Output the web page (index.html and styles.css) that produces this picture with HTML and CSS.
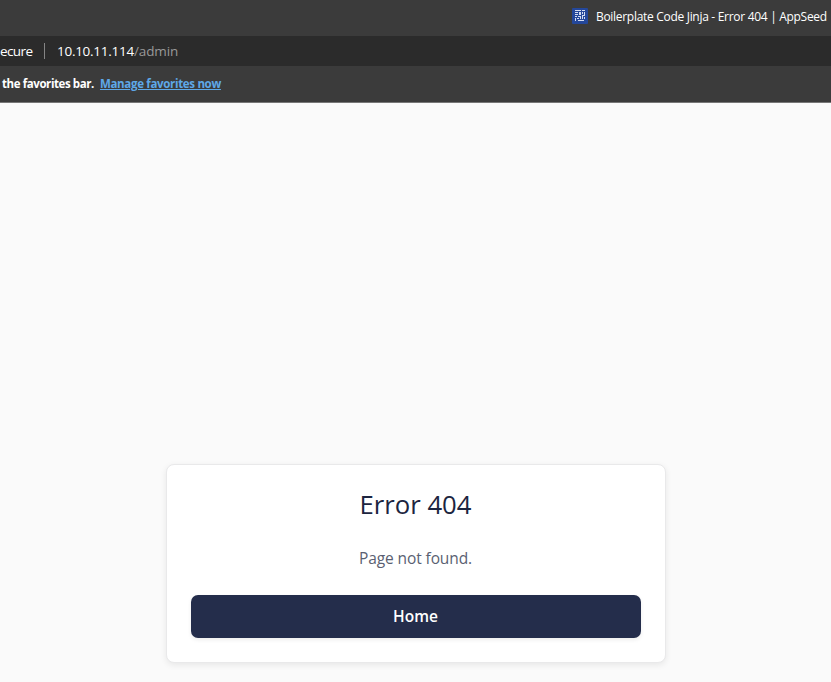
FILE: index.html
```
<!DOCTYPE html>
<html lang="en">
<head>
<meta charset="utf-8">
<title>Boilerplate Code Jinja - Error 404 | AppSeed</title>
<link rel="stylesheet" href="styles.css">
</head>
<body>
<header class="browser">
  <div class="tab-strip">
    <svg class="favicon" width="16" height="16" viewBox="0 0 16 16" aria-hidden="true">
      <rect width="16" height="16" rx="1" fill="#24479a"/>
      <path fill="#d3dcf2" d="M3 2h6v1H3zM10 2h3v1h-3zM3 4h3v1H3zM7 4h2v3H7zM10 4h1v2h-1zM12 4h1v4h-1zM3 6h3v1H3zM3 8h2v1H3zM6 8h3v1H6zM8 9h1v2H8zM10 7h2v1h-2zM10 8h1v3h-1zM12 9h1v2h-1zM3 10h1v3H3zM5 10h2v1H5zM6 12h6v1H6z"/>
    </svg>
    <span class="tab-title">Boilerplate Code Jinja - Error 404 | AppSeed</span>
  </div>
  <div class="address-bar">
    <span class="security">ecure</span>
    <span class="separator"></span>
    <span class="url"><span class="host">10.10.11.114</span><span class="path">/admin</span></span>
  </div>
  <div class="favorites-bar">
    <span class="hint">the favorites bar.</span>
    <a class="manage" href="#">Manage favorites now</a>
  </div>
</header>
<main class="page">
  <section class="card">
    <h1 class="heading">Error 404</h1>
    <p class="message">Page not found.</p>
    <a class="button" href="#">Home</a>
  </section>
</main>
</body>
</html>
```
FILE: styles.css
```
* { box-sizing: border-box; }
body {
  margin: 0;
  height: 682px;
  display: flex;
  flex-direction: column;
  overflow: hidden;
  background: #fafafa;
  font-family: "Open Sans", "Noto Sans", sans-serif;
}
.browser {
  height: 103px;
  flex: none;
  background: #3b3b3b;
  border-bottom: 1px solid #777;
  color: #fff;
  white-space: nowrap;
}
.tab-strip {
  height: 36px;
  display: flex;
  align-items: center;
  padding: 0 0 4px 572px;
}
.favicon { flex: none; margin-right: 8px; }
.tab-title { font-size: 12px; letter-spacing: -0.3px; }
.address-bar {
  height: 30px;
  display: flex;
  align-items: center;
  background: #2b2b2b;
  font-size: 13.5px;
}
.security { width: 32px; letter-spacing: -0.6px; }
.separator {
  width: 1px;
  height: 16px;
  margin: 0 12px;
  background: #858585;
}
.url { letter-spacing: -0.27px; }
.path { color: #999; letter-spacing: -0.1px; }
.favorites-bar {
  height: 36px;
  display: flex;
  align-items: center;
  gap: 6px;
  padding: 0 0 1px 2px;
  font-size: 11.5px;
  font-weight: 700;
}
.hint { letter-spacing: -0.41px; }
.manage { color: #5ea8e8; letter-spacing: -0.32px; }
.page {
  flex: 1;
  display: flex;
  justify-content: center;
  align-items: flex-end;
  padding-bottom: 19px;
}
.card {
  width: 500px;
  height: 199px;
  padding: 24px;
  border: 1px solid #e9e9ea;
  border-radius: 8px;
  background: #fff;
  box-shadow: 0 2px 6px rgba(0, 0, 0, 0.08);
  text-align: center;
}
.heading {
  margin: 0;
  font-size: 25.7px;
  line-height: 32px;
  font-weight: 400;
  color: #1c2540;
}
.message {
  margin: 25px 0 0;
  font-size: 15.5px;
  line-height: 24px;
  font-weight: 400;
  letter-spacing: -0.1px;
  color: #5a5f72;
}
.button {
  display: flex;
  justify-content: center;
  align-items: center;
  height: 43px;
  margin-top: 25px;
  padding-bottom: 2px;
  border-radius: 7px;
  background: #242d4b;
  box-shadow: 0 2px 4px rgba(0, 0, 0, 0.07);
  color: #fff;
  font-size: 15.5px;
  font-weight: 600;
  text-decoration: none;
}
```
